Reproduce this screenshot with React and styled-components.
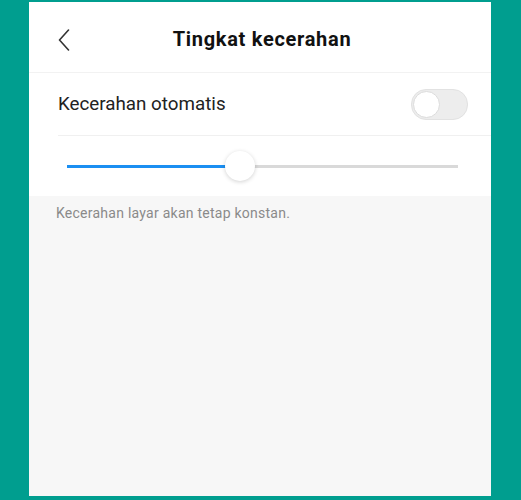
import React from "react";
import styled, { createGlobalStyle } from "styled-components";

const Global = createGlobalStyle`
  html, body { margin: 0; padding: 0; background: #009e8f; }
  body { font-family: Roboto, "Noto Sans", sans-serif; }
`;

const Screen = styled.div`
  margin: 2px 0 0 29px;
  width: 462px;
  height: 494px;
  background: #f7f7f7;
  display: flex;
  flex-direction: column;
`;

const Header = styled.header`
  position: relative;
  height: 70px;
  background: #fff;
  border-bottom: 1px solid #f2f2f2;
  display: flex;
  align-items: center;
  justify-content: center;
`;

const BackButton = styled.button`
  position: absolute;
  left: 28px;
  top: 26px;
  width: 14px;
  height: 24px;
  padding: 0;
  border: 0;
  background: none;
  display: flex;
  align-items: center;
  justify-content: center;
`;

const Title = styled.h1`
  margin: 4px 0 0;
  font-size: 20px;
  font-weight: 700;
  letter-spacing: 0.7px;
  color: #111;
  padding-left: 4px;
`;

const Card = styled.section`
  background: #fff;
  display: flex;
  flex-direction: column;
`;

const Row = styled.div`
  height: 62px;
  margin-left: 29px;
  padding-right: 23px;
  border-bottom: 1px solid #f0f0f0;
  display: flex;
  align-items: center;
  justify-content: space-between;
`;

const Label = styled.span`
  font-size: 18.8px;
  color: #222;
`;

const Toggle = styled.div`
  position: relative;
  width: 55px;
  height: 29px;
  border-radius: 15px;
  background: #ededed;
  border: 1px solid #e2e2e2;
`;

const Knob = styled.div`
  position: absolute;
  left: 1px;
  top: 1px;
  width: 25px;
  height: 25px;
  border-radius: 50%;
  background: #fff;
  border: 1px solid #dcdcdc;
`;

const SliderWrap = styled.div`
  height: 60px;
  padding: 0 33px 0 38px;
  display: flex;
  align-items: center;
`;

const Track = styled.div`
  position: relative;
  flex: 1;
  height: 3px;
  background: #d9d9d9;
`;

const Fill = styled.div`
  position: absolute;
  left: 0;
  top: 0;
  bottom: 0;
  background: #1b8ff2;
`;

const Thumb = styled.div`
  position: absolute;
  top: 50%;
  width: 30px;
  height: 30px;
  margin: -15px 0 0 -15px;
  border-radius: 50%;
  background: #fff;
  box-shadow: 0 1px 4px rgba(0, 0, 0, 0.18);
`;

const Caption = styled.p`
  margin: 0;
  padding: 9px 0 0 27px;
  font-size: 14px;
  letter-spacing: 0.25px;
  color: #8a8a8a;
`;

export default function App() {
  const pct = 44.2;
  return (
    <>
      <Global />
      <Screen>
        <Header>
          <BackButton aria-label="Kembali">
            <svg width="12" height="22" viewBox="0 0 12 22">
              <path d="M10.5 1 L1.5 11 L10.5 21" fill="none" stroke="#333" strokeWidth="1.6" strokeLinecap="round" strokeLinejoin="round" />
            </svg>
          </BackButton>
          <Title>Tingkat kecerahan</Title>
        </Header>
        <Card>
          <Row>
            <Label>Kecerahan otomatis</Label>
            <Toggle>
              <Knob />
            </Toggle>
          </Row>
          <SliderWrap>
            <Track>
              <Fill style={{ width: `${pct}%` }} />
              <Thumb style={{ left: `${pct}%` }} />
            </Track>
          </SliderWrap>
        </Card>
        <Caption>Kecerahan layar akan tetap konstan.</Caption>
      </Screen>
    </>
  );
}
